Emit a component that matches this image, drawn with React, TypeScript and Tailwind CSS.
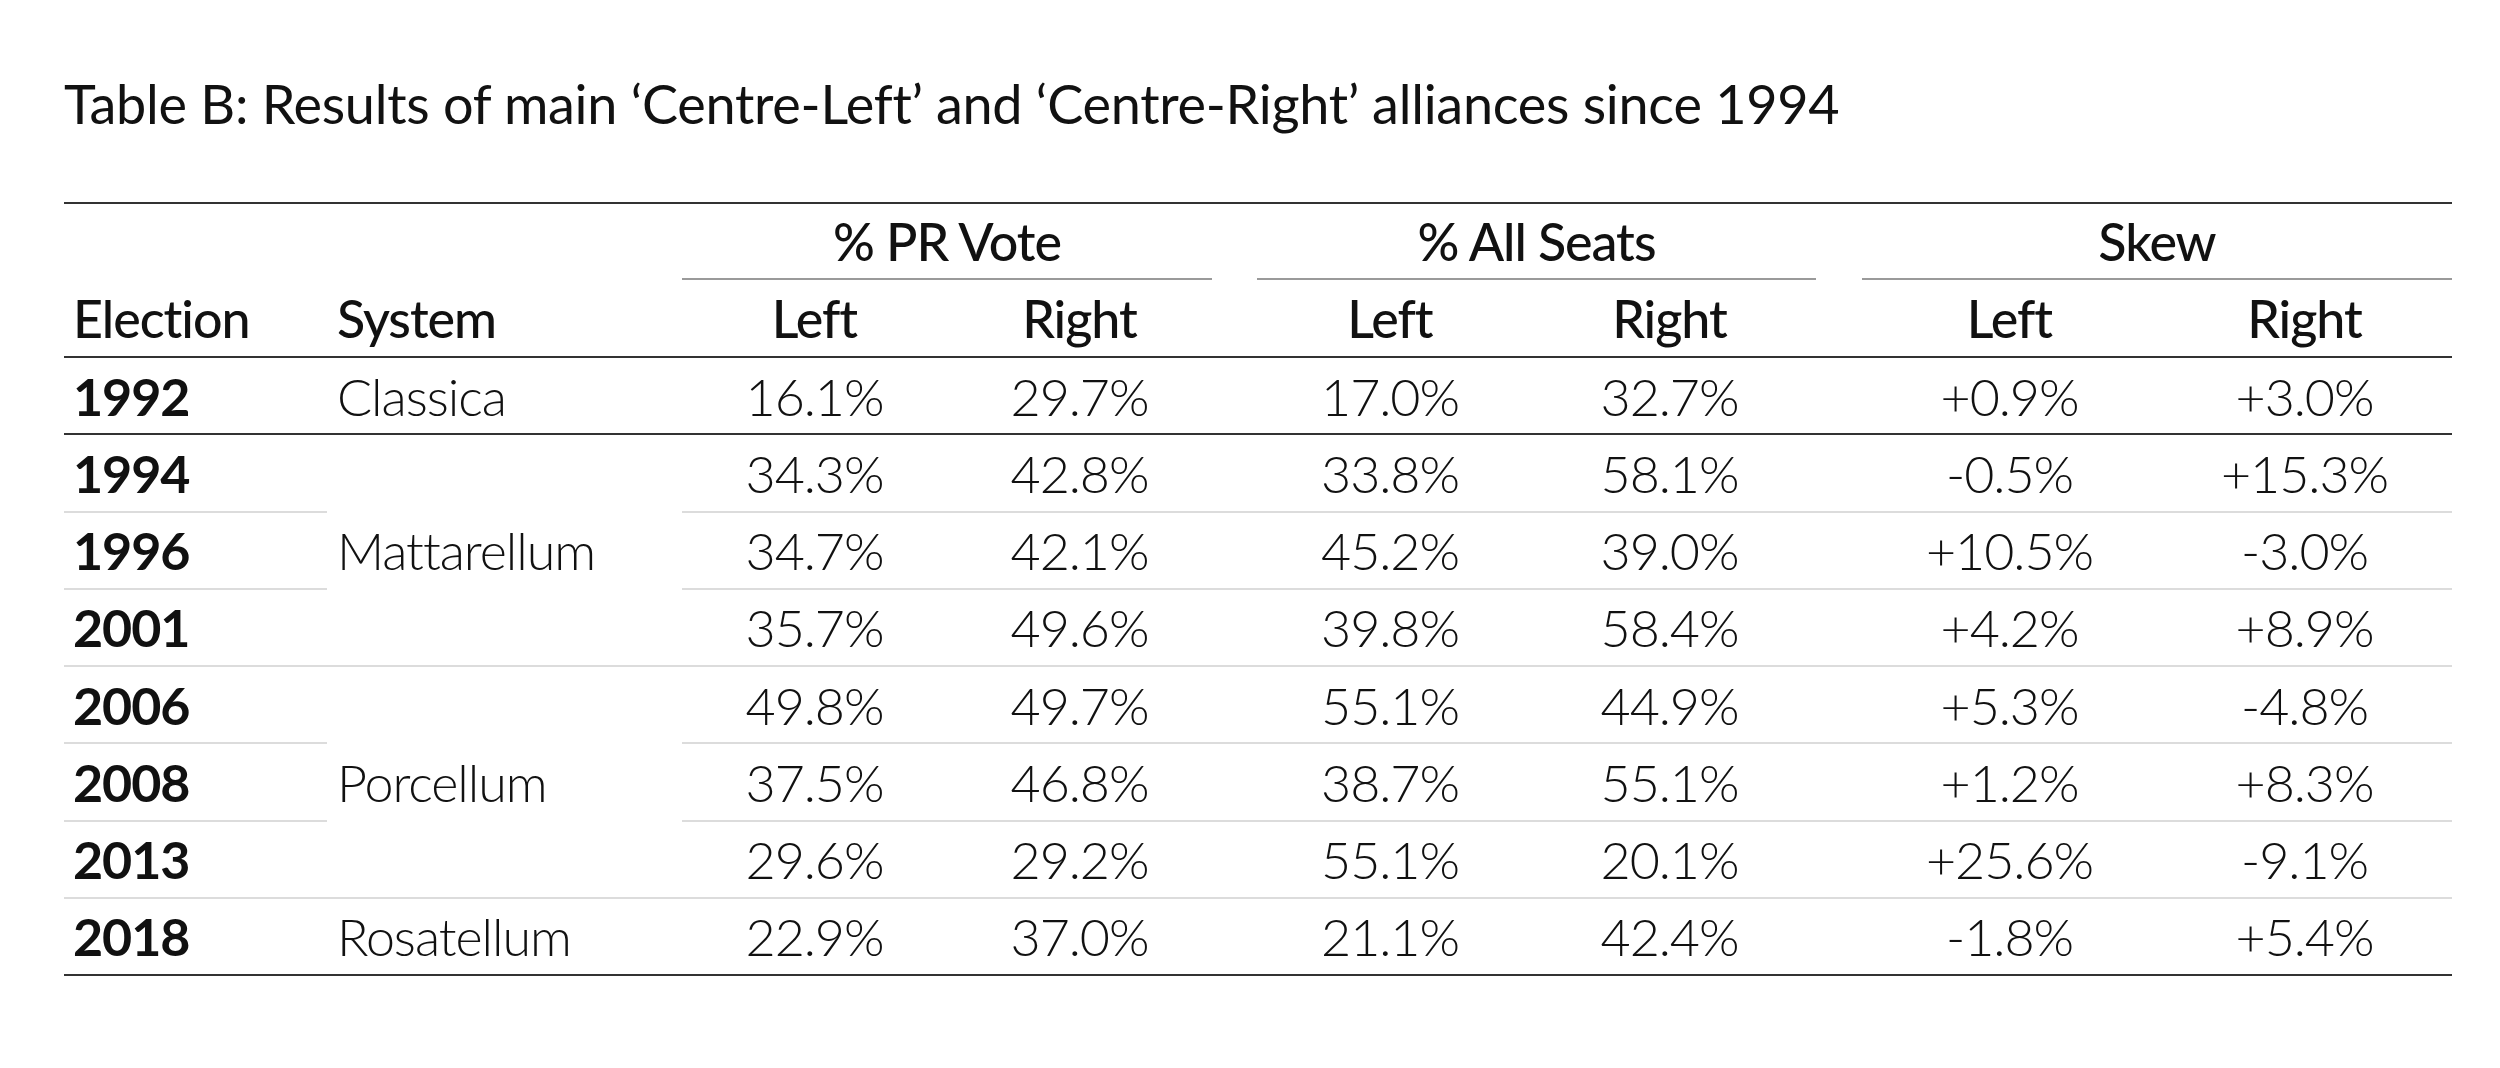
const COLS =
  "grid grid-cols-[263px_355px_265px_265px_45px_266px_293px_46px_295px_295px]";

type Row = {
  year: string;
  system?: { name: string; span: number };
  values: string[];
};

const ROWS: Row[] = [
  { year: "1992", system: { name: "Classica", span: 1 }, values: ["16.1%", "29.7%", "17.0%", "32.7%", "+0.9%", "+3.0%"] },
  { year: "1994", system: { name: "Mattarellum", span: 3 }, values: ["34.3%", "42.8%", "33.8%", "58.1%", "-0.5%", "+15.3%"] },
  { year: "1996", values: ["34.7%", "42.1%", "45.2%", "39.0%", "+10.5%", "-3.0%"] },
  { year: "2001", values: ["35.7%", "49.6%", "39.8%", "58.4%", "+4.2%", "+8.9%"] },
  { year: "2006", system: { name: "Porcellum", span: 3 }, values: ["49.8%", "49.7%", "55.1%", "44.9%", "+5.3%", "-4.8%"] },
  { year: "2008", values: ["37.5%", "46.8%", "38.7%", "55.1%", "+1.2%", "+8.3%"] },
  { year: "2013", values: ["29.6%", "29.2%", "55.1%", "20.1%", "+25.6%", "-9.1%"] },
  { year: "2018", system: { name: "Rosatellum", span: 1 }, values: ["22.9%", "37.0%", "21.1%", "42.4%", "-1.8%", "+5.4%"] },
];

// rows after which a dark rule is drawn
const DARK = new Set(["1992", "2018"]);

function GroupHead({ label }: { label: string }) {
  return (
    <div className="col-span-2 flex items-center justify-center border-b-2 border-[#9a9a9a] font-medium">
      {label}
    </div>
  );
}

export default function App() {
  return (
    <div className="min-h-screen bg-white pt-[77px] pl-[64px] font-[Lato,'Open_Sans',sans-serif] text-[52px] leading-none tracking-[-0.02em] text-[#111]">
      <h1 className="h-[54px] whitespace-nowrap text-[54px] font-normal tracking-[-0.005em]">
        Table B: Results of main ‘Centre-Left’ and ‘Centre-Right’ alliances since 1994
      </h1>

      <div className="mt-[71px] w-[2388px] border-t-2 border-[#333]">
        {/* group headings */}
        <div className={`${COLS} h-[76px]`}>
          <div className="col-span-2" />
          <GroupHead label="% PR Vote" />
          <div />
          <GroupHead label="% All Seats" />
          <div />
          <GroupHead label="Skew" />
        </div>

        {/* column headings */}
        <div className={`${COLS} h-[78px] border-b-2 border-[#333] font-medium`}>
          <div className="flex items-center pl-[9px]">Election</div>
          <div className="flex items-center pl-[10px]">System</div>
          <div className="flex items-center justify-center">Left</div>
          <div className="flex items-center justify-center">Right</div>
          <div />
          <div className="flex items-center justify-center">Left</div>
          <div className="flex items-center justify-center">Right</div>
          <div />
          <div className="flex items-center justify-center">Left</div>
          <div className="flex items-center justify-center">Right</div>
        </div>

        {/* body */}
        <div className={`${COLS} auto-rows-[77.25px]`}>
          {ROWS.map((r, i) => {
            const line = DARK.has(r.year) ? "border-[#333]" : "border-[#dcdcdc]";
            const sysEnd = r.system ? ROWS[i + r.system.span - 1].year : "";
            const sysLine = DARK.has(sysEnd) ? "border-[#333]" : "border-[#dcdcdc]";
            const cells = [...r.values.slice(0, 2), "", ...r.values.slice(2, 4), "", ...r.values.slice(4)];
            return [
              <div key={r.year} className={`flex items-center border-b-2 pl-[9px] font-bold ${line}`}>
                {r.year}
              </div>,
              r.system && (
                <div
                  key={r.year + "s"}
                  className={`flex items-center border-b-2 pl-[10px] font-light ${sysLine} ${
                    r.system.span === 3 ? "row-span-3" : ""
                  }`}
                >
                  {r.system.name}
                </div>
              ),
              ...cells.map((v, j) => (
                <div
                  key={r.year + j}
                  className={`flex items-center justify-center border-b-2 font-light ${line}`}
                >
                  {v}
                </div>
              )),
            ];
          })}
        </div>
      </div>
    </div>
  );
}
